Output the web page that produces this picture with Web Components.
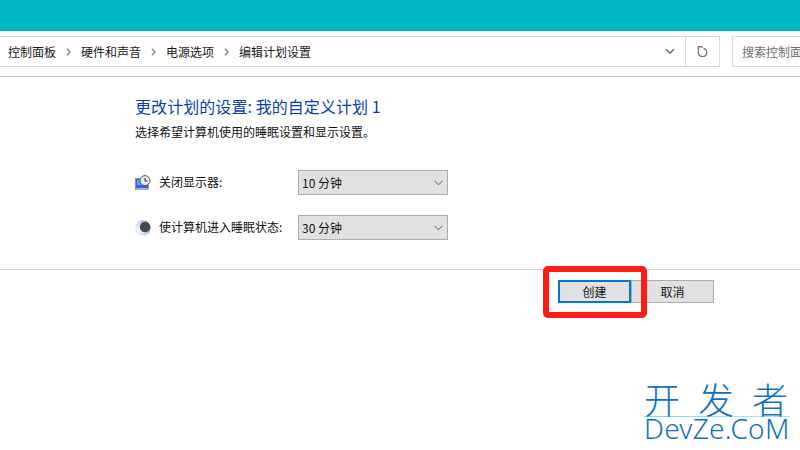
<!DOCTYPE html>
<html lang="zh"><head><meta charset="utf-8"><title>编辑计划设置</title>
<style>
html,body{margin:0;padding:0;width:800px;height:450px;overflow:hidden;background:#fff;font-family:"Noto Sans CJK SC","Noto Sans",sans-serif;color:#1a1a1a}
</style></head><body>
<cp-window></cp-window>
<script>
const cjk='"Noto Sans CJK SC","Noto Sans",sans-serif';
function def(name,html){
  customElements.define(name,class extends HTMLElement{
    constructor(){super();this.attachShadow({mode:'open'}).innerHTML=html;}
  });
}
def('cp-crumb',`<style>:host{display:inline-flex;align-items:center;font:12px/14px ${cjk};color:#1a1a1a;white-space:nowrap}
svg{margin-left:10px;width:5px;height:8px}:host([last]) svg{display:none}</style><slot></slot><svg viewBox="0 0 5 8"><path d="M1 .8 4 4 1 7.2" fill="none" stroke="#8a8a8a" stroke-width="1.5"/></svg>`);
def('cp-address',`<style>
:host{display:flex;height:31px;margin-top:5px;box-sizing:border-box}
.bar{flex:0 0 720px;box-sizing:border-box;display:flex;border:1px solid #d9d9d9;border-left:0;height:31px;align-items:center}
.path{flex:1;display:flex;align-items:center;padding-left:8px;gap:10px;height:100%}
.chev{width:30px;display:flex;justify-content:center;}
.ref{flex:0 0 34px;border-left:1px solid #d9d9d9;height:100%;display:flex;align-items:center;justify-content:center;box-sizing:border-box}
.search{margin-left:12px;flex:1;min-width:0;border:1px solid #d9d9d9;border-right:0;height:31px;box-sizing:border-box;font:12px/29px ${cjk};color:#6d6d6d;padding-left:9px;white-space:nowrap;overflow:hidden}
</style>
<div class="bar"><div class="path"><slot></slot></div>
<div class="chev"><svg width="10" height="7" viewBox="0 0 10 7"><path d="M1 1.2 5 5.2 9 1.2" fill="none" stroke="#6e6e6e" stroke-width="1.6"/></svg></div>
<div class="ref"><svg width="11" height="11" viewBox="0 0 11 11"><path d="M6.6 2.5A4.2 4.2 0 1 1 1.6 5" fill="none" stroke="#7a7a7a" stroke-width="1.4"/><path d="M6 .8H1.4V5" fill="none" stroke="#7a7a7a" stroke-width="1.4"/></svg></div></div>
<div class="search">搜索控制面板</div>`);
def('cp-select',`<style>
:host{display:flex;align-items:center;justify-content:space-between;width:150px;height:25px;box-sizing:border-box;background:#e1e1e1;border:1px solid #adadad;padding:0 4px 1px 3px;font:12px/23px ${cjk};color:#111}
svg{margin-top:1px}
</style><slot></slot><svg width="9" height="6" viewBox="0 0 9 6"><path d="M.5.8 4.5 4.8 8.5.8" fill="none" stroke="#555" stroke-width="1"/></svg>`);
def('cp-row',`<style>
:host{display:flex;align-items:center;height:25px;font:12px/16px ${cjk};color:#111}
.i{width:24px;height:18px;display:flex;align-items:center}
.l{width:139px;white-space:nowrap;margin-top:-2px}
</style><div class="i"><slot name="icon"></slot></div><div class="l"><slot name="label"></slot></div><slot></slot>`);
def('cp-button',`<style>
:host{display:flex;align-items:center;justify-content:center;height:23px;box-sizing:border-box;background:#e1e1e1;border:1px solid #adadad;font:12px/16px ${cjk};color:#111}
:host([primary]){border:2px solid #0078d7}
</style><slot></slot>`);
def('cp-watermark',`<style>
:host{position:absolute;left:644px;top:381px;width:146px;display:block;color:#1271bd;font-family:${cjk}}
.a{font-size:36px;line-height:35px;height:35px;display:flex;justify-content:space-between;padding-right:2px;font-weight:300}
.rule{height:1px;background:linear-gradient(90deg,#7fd8f2,#a8ecfb)}
.b{font:300 28px/22px "Noto Sans",sans-serif;white-space:nowrap;letter-spacing:.25px}
</style><div class="a"><span>开</span><span>发</span><span>者</span></div><div class="rule"></div><div class="b">DevZe.CoM</div>`);
def('cp-highlight',`<style>:host{position:absolute;left:543px;top:266px;width:104px;height:52px;box-sizing:border-box;border:6px solid #ff1c14;border-radius:5px;display:block}</style>`);
def('cp-window',`<style>
:host{display:block;position:relative;width:800px;height:450px;overflow:hidden;background:#fff}
.title{height:31px;background:#00b7c3}
.sep{height:1px;background:#bdbdbd;margin-top:9px}
.main{padding:19px 0 0 135px;height:193px;box-sizing:border-box;border-bottom:1px solid #d4d4d4}
h1{margin:0;font:400 16px/20px ${cjk};color:#0a3cb4;letter-spacing:.07px}
p{margin:7px 0 0;font:12px/18px ${cjk};color:#111}
.rows{margin-top:29px;display:flex;flex-direction:column;gap:20px}
.acts{display:flex;margin:10px 0 0 558px;}
cp-button:first-child{width:73px}
cp-button:last-child{width:83px}
</style>
<div class="title"></div>
<cp-address>
<cp-crumb>控制面板</cp-crumb><cp-crumb>硬件和声音</cp-crumb><cp-crumb>电源选项</cp-crumb><cp-crumb last>编辑计划设置</cp-crumb>
</cp-address>
<div class="sep"></div>
<div class="main">
<h1>更改计划的设置: 我的自定义计划 1</h1>
<p>选择希望计算机使用的睡眠设置和显示设置。</p>
<div class="rows">
<cp-row><svg slot="icon" width="16" height="16" viewBox="0 0 16 16"><rect x="0.5" y="3.5" width="13" height="11" fill="#3a62e0" stroke="#8795ad"/><path d="M2 5h7v5H2z" fill="#6f93f0"/><rect x="1" y="13" width="13" height="2" fill="#a3aec2"/><circle cx="10" cy="5.6" r="5" fill="#e8e8e8" stroke="#555"/><path d="M10 3v3h2.4" fill="none" stroke="#222"/></svg><span slot="label">关闭显示器:</span><cp-select>10 分钟</cp-select></cp-row>
<cp-row><svg slot="icon" width="16" height="16" viewBox="0 0 16 16"><defs><radialGradient id="g" cx=".3" cy=".6" r=".8"><stop offset="0" stop-color="#ffffff"/><stop offset=".6" stop-color="#c3d2ee"/><stop offset="1" stop-color="#6d8cc6"/></radialGradient></defs><circle cx="8" cy="8" r="7.8" fill="url(#g)"/><circle cx="10" cy="7" r="5.2" fill="#45474f"/></svg><span slot="label">使计算机进入睡眠状态:</span><cp-select>30 分钟</cp-select></cp-row>
</div>
</div>
<div class="acts"><cp-button primary>创建</cp-button><cp-button>取消</cp-button></div>
<cp-highlight></cp-highlight>
<cp-watermark></cp-watermark>`);
</script>
</body></html>
